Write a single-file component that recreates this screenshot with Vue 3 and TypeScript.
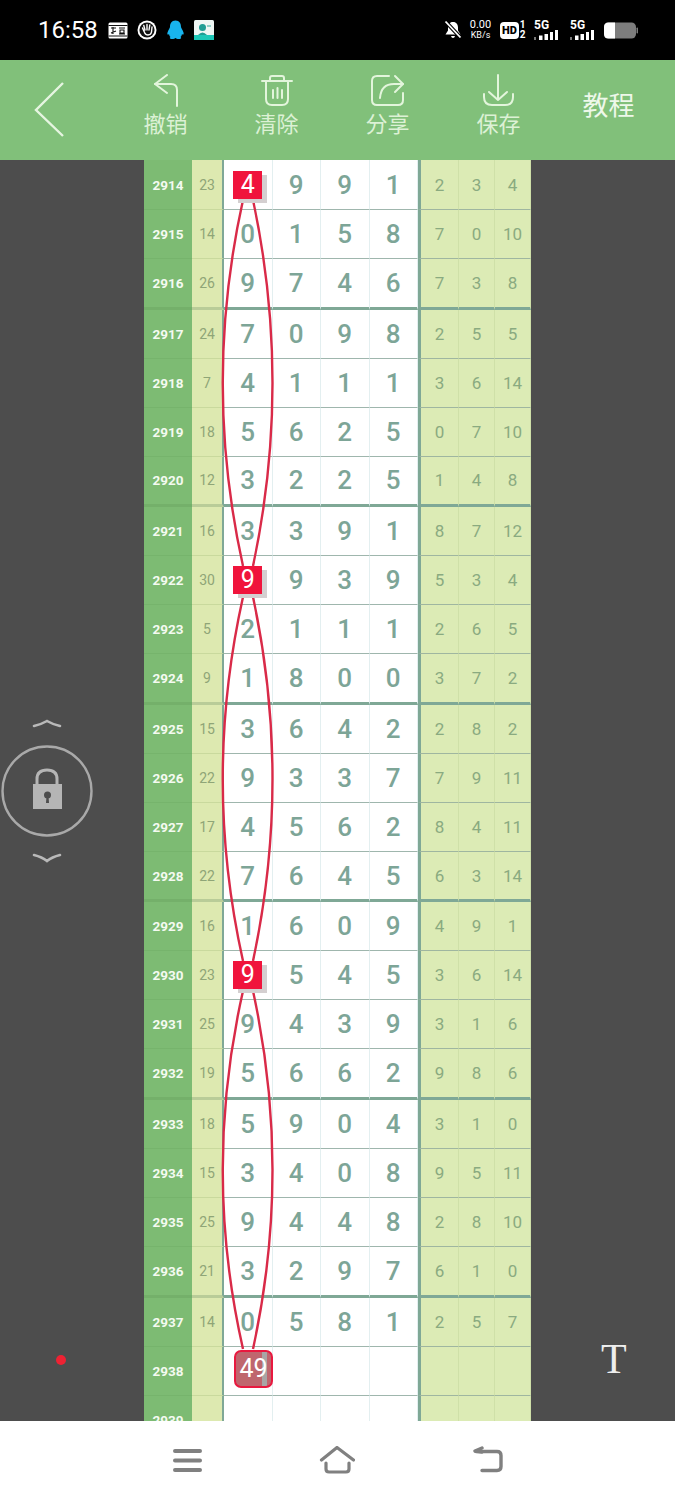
<script setup lang="ts">
/** 走势图录入页：顶部工具栏 + 期号表格 + 红色连线 */
interface Row {
  no: number;
  sum: string;
  digits: string[];
  stats: string[];
  end?: boolean;
  mark?: number;
  badge?: string;
}

// 每行格式：期号 和值 四位数 三个统计
const raw = `2914 23 4991 2 3 4
2915 14 0158 7 0 10
2916 26 9746 7 3 8 e
2917 24 7098 2 5 5
2918 7 4111 3 6 14
2919 18 5625 0 7 10
2920 12 3225 1 4 8 e
2921 16 3391 8 7 12
2922 30 9939 5 3 4
2923 5 2111 2 6 5
2924 9 1800 3 7 2 e
2925 15 3642 2 8 2
2926 22 9337 7 9 11
2927 17 4562 8 4 11
2928 22 7645 6 3 14 e
2929 16 1609 4 9 1
2930 23 9545 3 6 14
2931 25 9439 3 1 6
2932 19 5662 9 8 6 e
2933 18 5904 3 1 0
2934 15 3408 9 5 11
2935 25 9448 2 8 10
2936 21 3297 6 1 0 e
2937 14 0581 2 5 7`;

const marked = [2914, 2922, 2930];

const rows: Row[] = raw.split("\n").map((line) => {
  const p = line.split(" ");
  const no = Number(p[0]);
  return {
    no,
    sum: p[1],
    digits: p[2].split(""),
    stats: p.slice(3, 6),
    end: p[6] === "e",
    mark: marked.includes(no) ? 0 : undefined,
  };
});
rows.push({ no: 2938, sum: "", digits: ["", "", "", ""], stats: ["", "", ""], badge: "49" });
rows.push({ no: 2939, sum: "", digits: ["", "", "", ""], stats: ["", "", ""] });

const tools = [
  { label: "撤销", box: "147 74 36 34", kind: "undo" },
  { label: "清除", box: "258 74 36 34", kind: "trash" },
  { label: "分享", box: "369 74 36 34", kind: "share" },
  { label: "保存", box: "480 74 36 34", kind: "save" },
];

// 连线两两成对，坐标与页面一致（svg 的 viewBox 已按表格原点偏移）
const spans: [number, number][] = [
  [200, 566],
  [597, 961],
  [991, 1349],
];
function curve(x0: number, cx: number, y0: number, y1: number) {
  const d = (y1 - y0) / 3;
  return `M${x0} ${y0}C${cx} ${y0 + d} ${cx} ${y1 - d} ${x0} ${y1}`;
}
const curves = spans.flatMap(([a, b]) => [curve(243, 216, a, b), curve(253, 279, a, b)]);
</script>

<template>
  <div class="phone">
    <div class="status">
      <div class="status__left">
        <span class="status__time">16:58</span>
        <svg class="si si--first" width="20" height="19" viewBox="0 0 20 19">
          <rect x="0.5" y="1.5" width="19" height="16" rx="1.5" fill="#fff" />
          <rect x="0.5" y="4" width="19" height="1" fill="#111" />
          <rect x="0.5" y="14.5" width="19" height="1" fill="#111" />
          <path d="M3 7h5M5 6v7M3 12l5-2M11 7h6M12 9h4v3h-4zM11 13h6" stroke="#111" stroke-width="1.1" fill="none" />
        </svg>
        <svg class="si" width="20" height="20" viewBox="0 0 20 20">
          <circle cx="10" cy="10" r="9.5" fill="#fff" />
          <circle cx="10" cy="10" r="7.6" fill="#111" />
          <path d="M5.5 8l2.5 5.500q1 1.500 3 1.500 3 0 3.500-3l.5-5M8 10L6.800 5.500M10 10V4.500M12 10l.8-5" stroke="#fff" stroke-width="1.4" fill="none" stroke-linecap="round" />
        </svg>
        <svg class="si" width="19" height="20" viewBox="0 0 19 20">
          <path d="M9.500 0.500c4 0 5.500 3.200 5.500 6.500 0 1 1.500 2.500 2.500 5.500.6 2-.5 3-1.500 1.500-.3 1.500-.8 2.500-1.500 3 1 .6 1 2-1.500 2-2 0-3-.6-3.500-1-.5.4-1.500 1-3.500 1-2.500 0-2.500-1.400-1.500-2-.7-.5-1.200-1.500-1.500-3-1 1.500-2.100.5-1.500-1.500C2.500 9.500 4 8 4 7c0-3.300 1.500-6.500 5.500-6.500z" fill="#18b4ee" />
        </svg>
        <svg class="si" width="20" height="20" viewBox="0 0 20 20">
          <rect width="20" height="20" rx="1.500" fill="#eef6f4" />
          <rect y="15" width="20" height="5" fill="#1cc7b7" />
          <circle cx="8.500" cy="7.500" r="3.500" fill="#1f9d94" />
          <path d="M4 15q4.500-5 9 0z" fill="#1f9d94" />
          <rect x="13" y="5" width="4" height="2" fill="#8fcfc6" />
        </svg>
      </div>
      <div class="status__right">
        <svg width="18" height="20" viewBox="0 0 18 20">
          <path d="M9 2c3.500 0 5 2.500 5 5.500v3l2.500 4H1.500L4 10.500v-3C4 4.500 5.500 2 9 2zM7 16h4q-.5 2-2 2t-2-2z" fill="#fff" />
          <path d="M1.500 1.500l15 16" stroke="#000" stroke-width="4" />
          <path d="M1.500 1.500l15 16" stroke="#fff" stroke-width="1.800" />
        </svg>
        <div class="speed"><span>0.00</span><span class="speed__unit">KB/s</span></div>
        <div class="hd">HD</div>
        <div class="sim"><span>1</span><span>2</span></div>
        <div v-for="n in 2" :key="n" class="net">
          <span>5G</span>
          <svg width="27" height="10" viewBox="0 0 27 10">
            <rect x="0" y="7" width="2" height="3" fill="#777" />
            <rect x="5" y="5.500" width="3.500" height="4.500" fill="#fff" />
            <rect x="10.500" y="4" width="3.500" height="6" fill="#fff" />
            <rect x="16" y="2" width="3" height="8" fill="#fff" />
            <rect x="21" y="0" width="3" height="10" fill="#fff" />
          </svg>
        </div>
        <svg width="34" height="17" viewBox="0 0 34 17">
          <rect x="0" y="0.500" width="32" height="16" rx="4.500" fill="#7d7d7d" />
          <path d="M4.500 0.500H11V16.500H4.500Q0 16.500 0 12V5Q0 0.500 4.500 0.500z" fill="#fff" />
          <rect x="32.500" y="5.500" width="1.500" height="6" rx="0.700" fill="#7d7d7d" />
        </svg>
      </div>
    </div>

    <header class="bar">
      <div class="bar__back">
        <svg width="32" height="58" viewBox="33 81 32 58">
          <path d="M63 83L36 110l27 26" fill="none" stroke="#e6f5e1" stroke-width="2.400" />
        </svg>
      </div>
      <div v-for="t in tools" :key="t.kind" class="tool">
        <svg width="36" height="34" :viewBox="t.box" fill="none" stroke="#e3f5dc" stroke-width="2" stroke-linecap="round" stroke-linejoin="round">
          <template v-if="t.kind === 'undo'">
            <path d="M166 75l-12 9 12 9" />
            <path d="M154 84h16q6 0 6 6v16" />
          </template>
          <template v-else-if="t.kind === 'trash'">
            <path d="M261 81h30M269 81v-3q0-2 2-2h10q2 0 2 2v3" />
            <path d="M265 81v18q0 6 6 6h10q6 0 6-6V81" />
            <path d="M272 90v8M276.500 88v10M281 90v8" />
          </template>
          <template v-else-if="t.kind === 'share'">
            <path d="M388 76h-12q-5 0-5 5v19q0 5 5 5h21q5 0 5-5v-7" />
            <path d="M379 98q1-14 14-14h9" />
            <path d="M394 76l8 8-8 8" />
          </template>
          <template v-else>
            <path d="M497 75v25M488 92l9 8 9-8" />
            <path d="M483 94v3q0 8 8 8h13q8 0 8-8v-3" />
          </template>
        </svg>
        <span class="tool__label">{{ t.label }}</span>
      </div>
      <div class="bar__guide">教程</div>
    </header>

    <main class="stage">
      <div class="sheet">
        <div v-for="(r, i) in rows" :key="r.no" :class="['row', { 'row--end': r.end, 'row--first': i === 0 }]">
          <div class="c-no">{{ r.no }}</div>
          <div class="c-sum">{{ r.sum }}</div>
          <div v-for="(d, k) in r.digits" :key="k" class="c-digit">
            <span v-if="k === 0 && r.mark === 0" class="mark">{{ d }}</span>
            <span v-else-if="k === 0 && r.badge" class="badge">{{ r.badge }}</span>
            <template v-else>{{ d }}</template>
          </div>
          <div v-for="(s, k) in r.stats" :key="k" :class="['c-stat', { 'c-stat--lead': k === 0 }]">{{ s }}</div>
        </div>
        <svg class="lines" width="387" height="1261" viewBox="144 160 387 1261">
          <path v-for="(d, i) in curves" :key="i" :d="d" fill="none" stroke="#d92a48" stroke-width="2.400" />
        </svg>
      </div>

      <div class="lock">
        <svg width="96" height="150" viewBox="0 716 96 150">
          <path d="M34 726q8-2 13-5 5 3 13 5" fill="none" stroke="#b9b9b9" stroke-width="2.600" stroke-linecap="round" />
          <circle cx="47" cy="791" r="44.500" fill="none" stroke="#a9a9a9" stroke-width="2.400" />
          <path d="M37 785v-6q0-9 10-9t10 9v6" fill="none" stroke="#b5b5b5" stroke-width="3" />
          <rect x="33" y="784" width="29" height="25" fill="#b5b5b5" />
          <circle cx="47.500" cy="795" r="3.500" fill="#4d4d4d" />
          <path d="M46.500 796h2l.5 7h-3z" fill="#4d4d4d" />
          <path d="M34 855q8 2 13 6 5-4 13-6" fill="none" stroke="#b9b9b9" stroke-width="2.600" stroke-linecap="round" />
        </svg>
      </div>
      <span class="dot"></span>
      <span class="text-tool">T</span>
    </main>

    <nav class="nav">
      <svg width="30" height="28" viewBox="172 1446 30 28" fill="none" stroke="#808080" stroke-width="4" stroke-linecap="round">
        <path d="M175 1451h25M175 1460.500h25M175 1470h25" />
      </svg>
      <svg width="36" height="28" viewBox="319 1445 36 28" fill="none" stroke="#808080" stroke-width="3.200" stroke-linecap="round" stroke-linejoin="round">
        <path d="M321.500 1459L337 1446.500 353.500 1459" />
        <path d="M326 1462v6q0 3 3 3h17q3 0 3-3v-6" />
      </svg>
      <svg width="32" height="28" viewBox="471 1445 32 28" fill="none" stroke="#808080" stroke-width="3.400" stroke-linecap="round" stroke-linejoin="round">
        <path d="M481 1447l-7 3 7 1" />
        <path d="M475 1450.500h21q4 0 4 4v11q0 4-4 4h-15" />
      </svg>
    </nav>
  </div>
</template>

<style scoped>
.phone {
  display: flex;
  flex-direction: column;
  width: 675px;
  height: 1500px;
  overflow: hidden;
  font-family: Roboto, "Noto Sans CJK SC", sans-serif;
}

.status {
  display: flex;
  flex: none;
  align-items: center;
  justify-content: space-between;
  height: 60px;
  padding: 15px 37px 15px 38px;
  box-sizing: border-box;
  color: #fff;
  background: #000;
}

.status__left,
.status__right {
  display: flex;
  align-items: center;
}

.status__time {
  width: 57px;
  font-size: 24px;
}

.si {
  margin-left: 9px;
}

.si--first {
  margin-left: 13px;
}

.status__right {
  gap: 6px;
}

.speed {
  display: flex;
  flex-direction: column;
  align-items: center;
  width: 25px;
  font-size: 11px;
  line-height: 10px;
}

.speed__unit {
  font-size: 9px;
}

.hd {
  width: 19px;
  height: 17px;
  margin-left: 1px;
  color: #000;
  font-size: 11px;
  font-weight: 900;
  line-height: 17px;
  text-align: center;
  background: #fff;
  border-radius: 4px;
}

.sim {
  display: flex;
  flex-direction: column;
  align-items: center;
  width: 7px;
  margin-left: -6px;
  font-size: 10px;
  font-weight: 700;
  line-height: 10px;
}

.net {
  display: flex;
  flex-direction: column;
  width: 28px;
  margin-left: 2px;
  font-size: 12px;
  font-weight: 700;
  line-height: 11px;
}

.net svg {
  margin-top: -1px;
}

.bar {
  display: flex;
  flex: none;
  height: 100px;
  background: #81c07a;
}

.bar__back {
  width: 110px;
  padding: 21px 0 0 33px;
  box-sizing: border-box;
}

.bar__back svg,
.lock svg {
  display: block;
}

.tool {
  display: flex;
  flex-direction: column;
  align-items: center;
  width: 111px;
  padding-top: 14px;
  box-sizing: border-box;
}

.tool__label {
  margin-top: 1px;
  color: #dcf1d5;
  font-size: 22px;
  line-height: 32px;
}

.bar__guide {
  width: 109px;
  color: #eef8ea;
  font-size: 26px;
  line-height: 93px;
  text-align: center;
}

.stage {
  position: relative;
  display: flex;
  flex: none;
  justify-content: center;
  height: 1261px;
  overflow: hidden;
  background: #4d4d4d;
}

.sheet {
  position: relative;
  width: 387px;
}

.row {
  display: grid;
  grid-template-columns: 48px 32px repeat(4, 48.5px) 41px 36px 36px;
  height: 49px;
}

.row--first {
  height: 50px;
}

.row--end {
  height: 50.6px;
}

.row > div {
  display: flex;
  align-items: center;
  justify-content: center;
  box-sizing: border-box;
  min-width: 0;
}

.c-no {
  color: #f4faf1;
  font-size: 13.500px;
  font-weight: 700;
  background: #7dbb73;
  border-bottom: 1px solid #76b46c;
}

.c-sum {
  color: #8fa577;
  font-size: 14px;
  background: #dde9b0;
  border-right: 2px solid #7fa896;
  border-bottom: 1px solid #c9d99d;
}

.c-digit {
  position: relative;
  color: #7da597;
  font-size: 26px;
  font-weight: 500;
  background: #fff;
  border-right: 1px solid #e3eff0;
  border-bottom: 1px solid #9fb6ad;
}

.c-stat {
  color: #8aaa80;
  font-size: 17px;
  background: #dcebb5;
  border-right: 1px solid #cfe0a8;
  border-bottom: 1px solid #9fb6a0;
}

.c-stat--lead {
  border-left: 3px solid #7fa896;
}

.row--end .c-digit,
.row--end .c-stat {
  border-bottom: 3px solid #7fa896;
}

.row--end .c-sum {
  border-bottom: 3px solid #b9cc98;
}

.row--end .c-no {
  border-bottom: 3px solid #74b06a;
}

.mark {
  position: relative;
  z-index: 2;
  width: 29px;
  height: 28px;
  color: #fff;
  font-size: 25px;
  font-weight: 400;
  line-height: 28px;
  text-align: center;
  background: #f0143c;
  box-shadow: 5px 4px 0 #d4cfd0;
}

.badge {
  position: absolute;
  top: 3px;
  left: 10px;
  z-index: 2;
  box-sizing: border-box;
  width: 39px;
  height: 38px;
  color: #fff;
  font-size: 25px;
  font-weight: 400;
  line-height: 33px;
  text-align: center;
  background: linear-gradient(90deg, #bf666e 0 75%, #a9a5a5 75% 88%, #bf666e 88%);
  border: 2.500px solid #e8193f;
  border-radius: 7px;
}

.lines {
  position: absolute;
  top: 0;
  left: 0;
  z-index: 1;
  pointer-events: none;
}

.lock {
  position: absolute;
  top: 556px;
  left: 0;
}

.dot {
  position: absolute;
  top: 1195px;
  left: 56px;
  width: 10px;
  height: 10px;
  background: #ee2233;
  border-radius: 50%;
}

.text-tool {
  position: absolute;
  top: 1174px;
  left: 601px;
  color: #eee;
  font-family: "Liberation Serif", serif;
  font-size: 42px;
  line-height: 50px;
}

.nav {
  display: flex;
  flex: 1;
  align-items: flex-start;
  justify-content: center;
  gap: 117px;
  padding-top: 25px;
  box-sizing: border-box;
  background: #fff;
}

.nav svg {
  display: block;
}
</style>

<style>
html,
body {
  background: #4d4d4d;
}
</style>
